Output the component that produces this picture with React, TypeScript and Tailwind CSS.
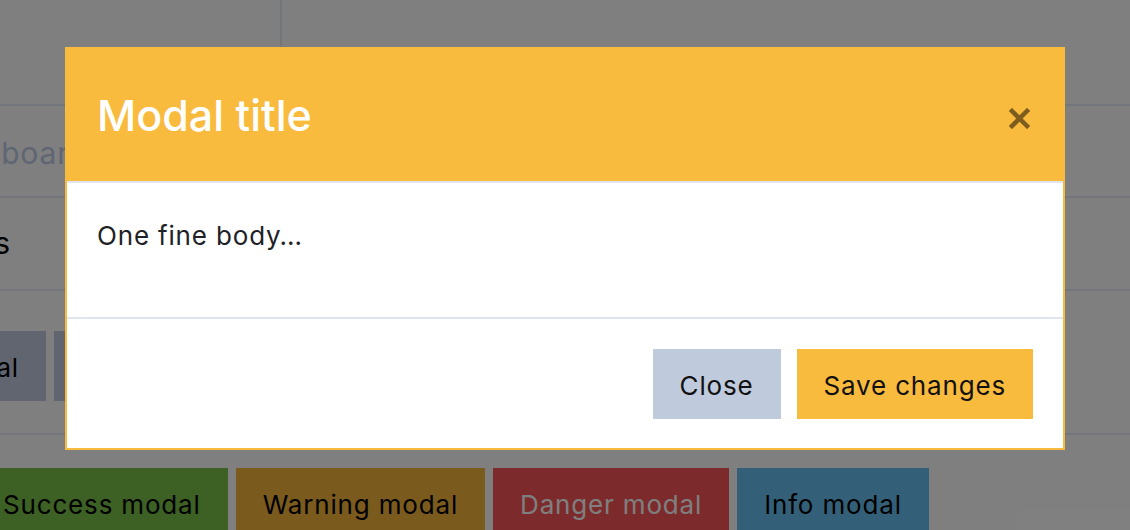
import React from "react";

const font = "font-['Inter','Noto_Sans',sans-serif]";

function CloseIcon() {
  return (
    <svg width="21" height="21" viewBox="0 0 21 21" className="mt-[7px] mr-[3px]">
      <path d="M3 3 L18 18 M18 3 L3 18" stroke="#000" strokeOpacity="0.5" strokeWidth="4.5" strokeLinecap="square" />
    </svg>
  );
}

export default function App() {
  return (
    <div className={`relative w-[1130px] h-[530px] overflow-hidden bg-white tracking-[0.052em] ${font}`}>
      {/* page behind the modal */}
      <div className="flex flex-col">
        <div className="h-[106px] flex border-b-2 border-[#e4ecf8]">
          <div className="w-[282px] border-r-2 border-[#e4ecf8]"></div>
        </div>
        <div className="h-[92px] flex items-center border-b-2 border-[#e4ecf8]">
          <div className="w-[88px] flex justify-end shrink-0 pt-[4px]">
            <span className="whitespace-nowrap text-[30px] text-[#becae6]">Dashboard</span>
          </div>
        </div>
        <div className="h-[93px] flex items-center border-b-2 border-[#e4ecf8]">
          <div className="w-[11px] flex justify-end shrink-0">
            <span className="whitespace-nowrap text-[30px] text-black">Modals</span>
          </div>
        </div>

        <div className="mt-[40px] pb-[32px] border-b-2 border-[#e4ecf8] flex gap-2">
          <div className="w-[46px] flex justify-end shrink-0">
            <button className="h-[70px] px-[27px] pt-[2px] whitespace-nowrap bg-[#c0cade] text-[26px] text-black">Default modal</button>
          </div>
          <button className="h-[70px] px-[27px] pt-[2px] whitespace-nowrap bg-[#c0cade] text-[26px] text-black">Primary modal</button>
        </div>

        <div className="mt-[33px] ml-[-24px] flex gap-2">
          <button className="h-[70px] px-[27px] pt-[2px] whitespace-nowrap bg-[#7ac248] text-[26px] text-black">Success modal</button>
          <button className="h-[70px] px-[27px] pt-[2px] whitespace-nowrap bg-[#f6b43c] text-[26px] text-black">Warning modal</button>
          <button className="h-[70px] px-[27px] pt-[2px] whitespace-nowrap bg-[#f85456] text-[26px] text-white">Danger modal</button>
          <button className="h-[70px] px-[27px] pt-[2px] whitespace-nowrap bg-[#66c0f0] text-[26px] text-black">Info modal</button>
        </div>
      </div>

      {/* backdrop + modal */}
      <div className="absolute inset-0 bg-black/50">
        <div className="ml-[65px] mt-[47px] w-[1000px] border-2 border-[#f9bb3d] bg-white">
          <div className="h-[132px] bg-[#f9bb3d] px-[30px] flex items-center justify-between">
            <h5 className="text-[43px] font-medium tracking-normal text-white">Modal title</h5>
            <CloseIcon />
          </div>
          <div className="h-[136px] border-t-2 border-[#e0e5ee] px-[30px] pt-[33px]">
            <p className="text-[26px] leading-[39px] text-[#1e2226]">One fine body…</p>
          </div>
          <div className="border-t-2 border-[#e0e4ef] pt-[30px] pb-[29px] px-[30px] flex justify-end gap-4">
            <button className="h-[70px] px-[27px] pt-[2px] bg-[#bfcadd] text-[26px] text-[#111]">Close</button>
            <button className="h-[70px] px-[27px] pt-[2px] bg-[#f9bb3d] text-[26px] text-[#111]">Save changes</button>
          </div>
        </div>
      </div>
    </div>
  );
}
